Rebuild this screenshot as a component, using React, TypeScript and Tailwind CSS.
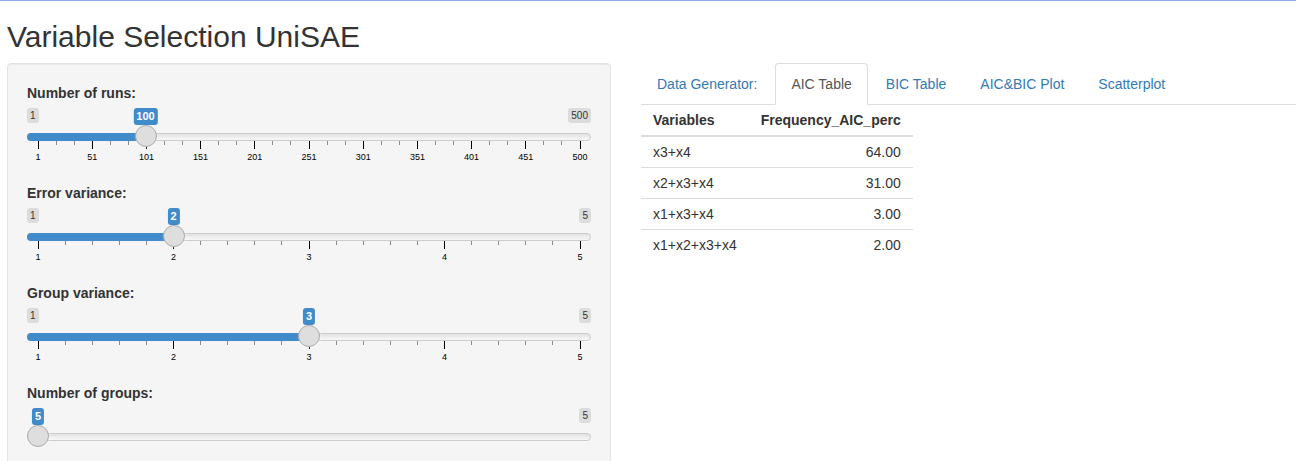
import React from "react";

type Tick = { f: number; label?: string; major: boolean };

function buildTicks(labels: string[], smallPer: number): Tick[] {
  const n = labels.length - 1;
  const ticks: Tick[] = [];
  for (let i = 0; i <= n; i++) {
    if (i > 0)
      for (let s = 1; s <= smallPer; s++)
        ticks.push({ f: (i - 1 + s / (smallPer + 1)) / n, major: false });
    ticks.push({ f: i / n, label: labels[i], major: true });
  }
  return ticks;
}

const W = 564;
const HW = 22;
const G = W - HW;

function Slider({
  label,
  min,
  max,
  value,
  labels,
  smallPer,
  hideMin,
}: {
  label: string;
  min: number;
  max: number;
  value: number;
  labels?: string[];
  smallPer?: number;
  hideMin?: boolean;
}) {
  const f = max === min ? 0 : (value - min) / (max - min);
  const cx = HW / 2 + f * G;
  const ticks = labels ? buildTicks(labels, smallPer ?? 0) : [];
  return (
    <div className="mb-[15px]">
      <label className="block font-bold mb-[5px] leading-5">{label}</label>
      <div className="relative h-[60px] w-full">
        {!hideMin && (
          <span className="absolute left-0 top-0 rounded-[3px] bg-black/10 px-[3px] py-px text-[10px] leading-[1.333] text-[#333]">
            {min}
          </span>
        )}
        <span className="absolute right-0 top-0 rounded-[3px] bg-black/10 px-[3px] py-px text-[10px] leading-[1.333] text-[#333]">
          {max}
        </span>
        <div className="absolute left-0 right-0 top-[25px] h-[8px] rounded-full border border-[#ccc] bg-linear-to-b from-[#e2e2e2] to-[#f8f8f8]" />
        {f > 0 && (
          <div
            className="absolute left-0 top-[25px] h-[8px] rounded-l-full bg-[#428bca]"
            style={{ width: cx }}
          />
        )}
        {ticks.map((t, i) => (
          <div key={i}>
            <div
              className={
                t.major
                  ? "absolute top-[33px] h-[8px] w-px bg-black"
                  : "absolute top-[33px] h-[4px] w-px bg-[#8a8a8a]"
              }
              style={{ left: HW / 2 + t.f * G - 0.5 }}
            />
            {t.major && (
              <span
                className="absolute top-[45px] -translate-x-1/2 whitespace-nowrap text-[9px] leading-[9px] text-black"
                style={{ left: HW / 2 + t.f * G }}
              >
                {t.label}
              </span>
            )}
          </div>
        ))}
        <div
          className="absolute top-[17px] h-[22px] w-[22px] rounded-full border border-[#ababab] bg-[#dedede] shadow-[1px_1px_3px_rgba(255,255,255,0.3)]"
          style={{ left: f * G }}
        />
        <span
          className="absolute top-0 -translate-x-1/2 whitespace-nowrap rounded-[3px] bg-[#428bca] px-[3px] py-px text-[11px] font-bold leading-[1.333] text-white"
          style={{ left: cx }}
        >
          {value}
        </span>
      </div>
    </div>
  );
}

const rows: [string, string][] = [
  ["x3+x4", "64.00"],
  ["x2+x3+x4", "31.00"],
  ["x1+x3+x4", "3.00"],
  ["x1+x2+x3+x4", "2.00"],
];

const tabs = ["Data Generator:", "AIC Table", "BIC Table", "AIC&BIC Plot", "Scatterplot"];

export default function App() {
  return (
    <div
      className="h-[461px] overflow-hidden bg-white text-[14px] leading-5 text-[#333]"
      style={{ fontFamily: '"Liberation Sans", Helvetica, Arial, sans-serif' }}
    >
      <div className="h-px bg-[#8cb0e6]" />
      <div className="pl-[7px]">
        <h2 className="mt-[19px] mb-[10px] text-[30px] leading-[1.1] font-normal">
          Variable Selection UniSAE
        </h2>
        <div className="flex gap-[30px]">
          <div className="w-[604px] shrink-0 rounded-[4px] border border-[#e3e3e3] bg-[#f5f5f5] p-[19px] shadow-[inset_0_1px_1px_rgba(0,0,0,0.05)]">
            <Slider
              label="Number of runs:"
              min={1}
              max={500}
              value={100}
              labels={["1", "51", "101", "151", "201", "251", "301", "351", "401", "451", "500"]}
              smallPer={2}
            />
            <Slider
              label="Error variance:"
              min={1}
              max={5}
              value={2}
              labels={["1", "2", "3", "4", "5"]}
              smallPer={4}
            />
            <Slider
              label="Group variance:"
              min={1}
              max={5}
              value={3}
              labels={["1", "2", "3", "4", "5"]}
              smallPer={4}
            />
            <Slider label="Number of groups:" min={5} max={5} value={5} hideMin />
          </div>
          <div className="min-w-0 flex-1">
            <ul className="flex border-b border-[#ddd]">
              {tabs.map((t) => {
                const active = t === "AIC Table";
                return (
                  <li key={t} className="-mb-px mr-[2px]">
                    <a
                      className={
                        active
                          ? "block rounded-t-[4px] border border-[#ddd] border-b-transparent bg-white px-[15px] py-[10px] leading-5 text-[#555]"
                          : "block rounded-t-[4px] border border-transparent px-[15px] py-[10px] leading-5 text-[#337ab7]"
                      }
                    >
                      {t}
                    </a>
                  </li>
                );
              })}
            </ul>
            <table className="border-collapse">
              <thead>
                <tr>
                  <th className="border-b-2 border-[#ddd] px-3 py-[5px] text-left font-bold">Variables</th>
                  <th className="border-b-2 border-[#ddd] px-3 py-[5px] text-right font-bold">
                    Frequency_AIC_perc
                  </th>
                </tr>
              </thead>
              <tbody>
                {rows.map(([a, b], i) => (
                  <tr key={a}>
                    <td className={i > 0 ? "border-t border-[#ddd] px-3 py-[5px]" : "px-3 py-[5px]"}>{a}</td>
                    <td
                      className={
                        i > 0 ? "border-t border-[#ddd] px-3 py-[5px] text-right" : "px-3 py-[5px] text-right"
                      }
                    >
                      {b}
                    </td>
                  </tr>
                ))}
              </tbody>
            </table>
          </div>
        </div>
      </div>
    </div>
  );
}
